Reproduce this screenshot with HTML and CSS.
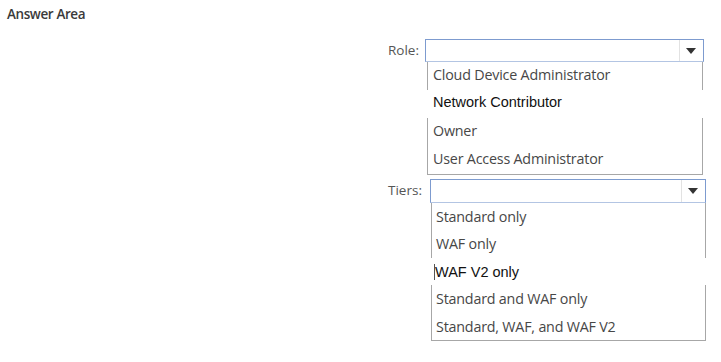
FILE: index.html
```html
<!DOCTYPE html>
<html lang="en">
  <head>
    <meta charset="UTF-8" />
    <title>Answer Area</title>
    <link rel="stylesheet" href="styles.css">
  </head>
  <body>
    <h1 class="title">Answer Area</h1>
    <div class="answers">
      <div class="field role">
        <span class="label">Role:</span>
        <div class="dropdown">
          <div class="select"><span class="arrow"></span></div>
          <ul class="options">
            <li>Cloud Device Administrator</li>
            <li class="pasted">Network Contributor</li>
            <li>Owner</li>
            <li>User Access Administrator</li>
          </ul>
        </div>
      </div>
      <div class="field tiers">
        <span class="label">Tiers:</span>
        <div class="dropdown">
          <div class="select"><span class="arrow"></span></div>
          <ul class="options">
            <li>Standard only</li>
            <li>WAF only</li>
            <li class="pasted cursor">WAF V2 only</li>
            <li>Standard and WAF only</li>
            <li>Standard, WAF, and WAF V2</li>
          </ul>
        </div>
      </div>
    </div>
  </body>
</html>
```
FILE: styles.css
```css
body {
  margin: 0;
  background: #ffffff;
  font-family: "Open Sans", "Noto Sans", sans-serif;
  color: #474747;
}
.title {
  margin: 0;
  padding: 5px 0 0 7px;
  font-size: 13.5px;
  font-weight: 600;
  color: #3a3a3a;
  letter-spacing: -0.4px;
  height: 39px;
  box-sizing: border-box;
}
.answers {
  display: flex;
  flex-direction: column;
  align-items: flex-end;
  gap: 4px;
}
.field {
  display: flex;
  align-items: flex-start;
}
.role {
  margin-right: 17px;
}
.tiers {
  margin-right: 15px;
}
.label {
  font-size: 13.5px;
  color: #555;
  padding-top: 2px;
  margin-right: 6px;
  width: 33px;
  text-align: right;
}
.tiers .label {
  margin-right: 9px;
}
.dropdown {
  width: 279px;
}
.tiers .dropdown {
  width: 276px;
}
.select {
  height: 21px;
  border: 1px solid #7d9bcf;
  border-bottom-color: #b3c5e3;
  position: relative;
  background: #fff;
}
.tiers .select {
  height: 22px;
}
.arrow {
  position: absolute;
  right: 0;
  top: 0;
  bottom: 0;
  width: 23px;
  border-left: 1px solid #e2e2e2;
}
.arrow::after {
  content: "";
  position: absolute;
  left: 6px;
  top: 8px;
  border-left: 5px solid transparent;
  border-right: 5px solid transparent;
  border-top: 6px solid #333;
}
.options {
  list-style: none;
  margin: 0 1px 0 2px;
  padding: 0;
  border: 1px solid #a7a7a7;
  border-top: none;
  font-size: 14.3px;
  letter-spacing: -0.2px;
}
.options li {
  height: 28px;
  line-height: 25px;
  padding-left: 5px;
}
.tiers .options {
  margin: 0 0 0 1px;
}
.tiers .options li {
  height: 27.4px;
  line-height: 28px;
  padding-left: 4px;
}
.options .pasted {
  font-family: "Liberation Sans", Arial, sans-serif;
  font-size: 14.5px;
  letter-spacing: 0;
  color: #111;
  background: #fff;
  margin: 0 -3px 0 -1px;
  padding-left: 6px;
  position: relative;
}
.options .cursor::before {
  content: "";
  position: absolute;
  left: 3px;
  top: 6px;
  height: 16px;
  border-left: 1px solid #555;
}
```
